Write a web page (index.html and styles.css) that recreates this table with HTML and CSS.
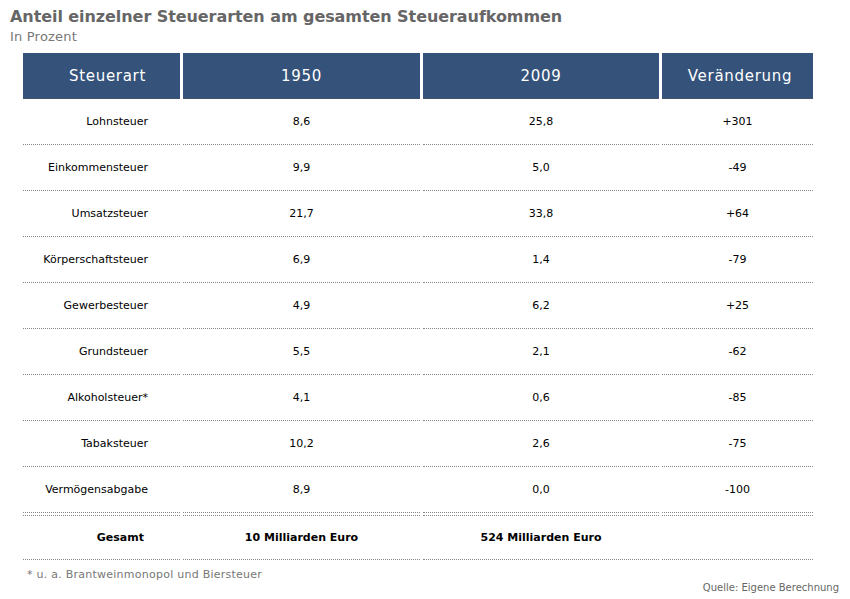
FILE: index.html
```html
<!DOCTYPE html>
<html lang="de">
<head>
<meta charset="utf-8">
<link rel="stylesheet" href="styles.css">
</head>
<body>
<div class="page">
  <h1 class="title">Anteil einzelner Steuerarten am gesamten Steueraufkommen</h1>
  <div class="subtitle">In Prozent</div>
  <table class="tax">
    <colgroup>
      <col class="w1"><col class="w2"><col class="w3"><col class="w4">
    </colgroup>
    <thead>
      <tr>
        <th class="c1">Steuerart</th>
        <th class="c2">1950</th>
        <th class="c3">2009</th>
        <th class="c4">Veränderung</th>
      </tr>
    </thead>
    <tbody>
      <tr><td class="name">Lohnsteuer</td><td>8,6</td><td>25,8</td><td>+301</td></tr>
      <tr><td class="name">Einkommensteuer</td><td>9,9</td><td>5,0</td><td>-49</td></tr>
      <tr><td class="name">Umsatzsteuer</td><td>21,7</td><td>33,8</td><td>+64</td></tr>
      <tr><td class="name">Körperschaftsteuer</td><td>6,9</td><td>1,4</td><td>-79</td></tr>
      <tr><td class="name">Gewerbesteuer</td><td>4,9</td><td>6,2</td><td>+25</td></tr>
      <tr><td class="name">Grundsteuer</td><td>5,5</td><td>2,1</td><td>-62</td></tr>
      <tr><td class="name">Alkoholsteuer*</td><td>4,1</td><td>0,6</td><td>-85</td></tr>
      <tr><td class="name">Tabaksteuer</td><td>10,2</td><td>2,6</td><td>-75</td></tr>
      <tr><td class="name">Vermögensabgabe</td><td>8,9</td><td>0,0</td><td>-100</td></tr>
      <tr class="spacer"><td></td><td></td><td></td><td></td></tr>
      <tr class="total"><td class="name">Gesamt</td><td>10 Milliarden Euro</td><td>524 Milliarden Euro</td><td></td></tr>
    </tbody>
  </table>
  <div class="note">* u. a. Brantweinmonopol und Biersteuer</div>
  <div class="source">Quelle: Eigene Berechnung</div>
</div>
</body>
</html>
```

FILE: styles.css
```css
html, body {
  margin: 0;
  padding: 0;
  background: #ffffff;
}
.page {
  width: 850px;
  height: 599px;
  font-family: "DejaVu Sans", Verdana, sans-serif;
  color: #000;
}
.title {
  margin: 0;
  padding: 7px 0 0 10px;
  font-size: 16px;
  line-height: 20px;
  font-weight: bold;
  letter-spacing: -0.07px;
  color: #666666;
}
.subtitle {
  padding: 2px 0 0 10px;
  font-size: 13px;
  line-height: 16px;
  letter-spacing: 0.2px;
  color: #777777;
}
.tax {
  margin: 8px 0 0 20px;
  width: 796px;
  table-layout: fixed;
  border-collapse: separate;
  border-spacing: 3px 0;
  font-size: 11px;
}
.w1 { width: 157px; }
.w2 { width: 237px; }
.w3 { width: 236px; }
.w4 { width: 151px; }
.tax th {
  background: #34527a;
  color: #ffffff;
  font-weight: normal;
  font-size: 15px;
  letter-spacing: 0.7px;
  height: 45px;
  padding: 0;
  border-bottom: 1px dotted #555;
  text-align: center;
}
.tax th.c1 { padding-left: 12px; }
.tax th.c4 { padding-left: 5px; }
.tax td {
  height: 45px;
  padding: 0;
  text-align: center;
  border-bottom: 1px dotted #888;
}
.tax td.name {
  text-align: right;
  padding-right: 32px;
}
.tax tr.spacer td {
  height: 2px;
  line-height: 0;
  font-size: 0;
}
.tax tr.total td {
  font-weight: bold;
  height: 43px;
}
.tax tr.total td.name {
  padding-right: 36px;
}
.note {
  padding: 8px 0 0 27px;
  font-size: 11px;
  line-height: 14px;
  letter-spacing: 0.25px;
  color: #777777;
}
.source {
  text-align: right;
  padding-right: 11px;
  font-size: 10px;
  line-height: 12px;
  color: #666666;
}
```
